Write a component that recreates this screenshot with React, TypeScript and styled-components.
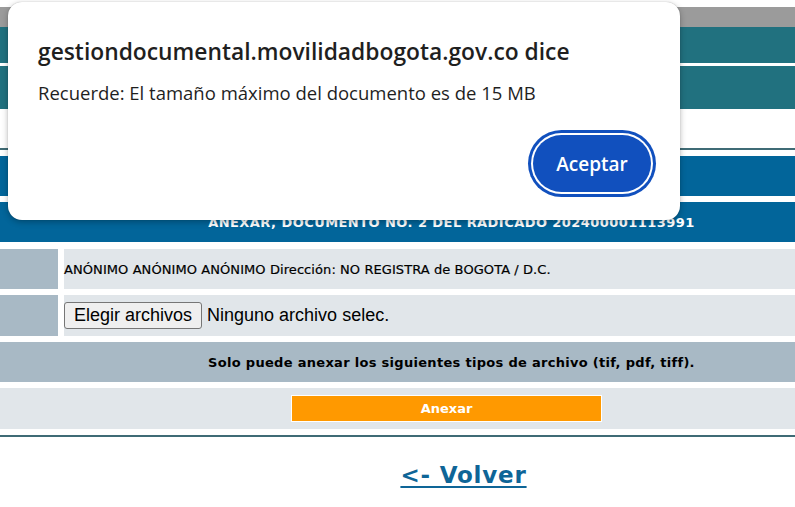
import React from 'react'
import styled, { createGlobalStyle } from 'styled-components'

const GlobalStyle = createGlobalStyle`
  html, body {
    margin: 0;
    padding: 0;
    background: #ffffff;
  }
`

const Screen = styled.div`
  position: relative;
  width: 795px;
  height: 507px;
  overflow: hidden;
  font-family: 'DejaVu Sans', Verdana, sans-serif;
  background: #ffffff;
`

const Page = styled.div`
  display: flex;
  flex-direction: column;
  padding-top: 7px;
`

const Band = styled.div<{ $h: number; $bg: string; $gap?: number }>`
  height: ${(p) => p.$h}px;
  background: ${(p) => p.$bg};
  margin-bottom: ${(p) => p.$gap ?? 0}px;
  display: flex;
  align-items: center;
  justify-content: center;
`

const Rule = styled.hr<{ $after: number }>`
  margin: 0 0 ${(p) => p.$after}px 0;
  border: 0;
  height: 2px;
  background: #3f6b75;
`

const BandTitle = styled.span`
  padding-left: 108px;
  color: #ffffff;
  font-weight: bold;
  font-size: 13px;
  letter-spacing: 0.45px;
`

const Grid = styled.div`
  display: grid;
  grid-template-columns: 58px 1fr;
  column-gap: 6px;
  row-gap: 6px;
  margin-top: 7px;
  margin-bottom: 6px;
`

const SideCell = styled.div`
  background: #a8b9c5;
`

const Cell = styled.div<{ $h: number }>`
  height: ${(p) => p.$h}px;
  background: #e1e6ea;
  display: flex;
  align-items: center;
`

const WideCell = styled.div<{ $h: number; $bg: string }>`
  grid-column: 1 / -1;
  height: ${(p) => p.$h}px;
  background: ${(p) => p.$bg};
  display: flex;
  align-items: center;
  justify-content: center;
`

const Sender = styled.span`
  font-size: 13px;
  color: #000;
  letter-spacing: 0.08px;
  -webkit-text-stroke: 0.2px #000;
`

const FileButton = styled.button`
  font-family: 'Liberation Sans', Arial, sans-serif;
  font-size: 18px;
  color: #000;
  background: #efefef;
  border: 1px solid #767676;
  border-radius: 3px;
  height: 27px;
  padding: 0 9px;
  margin-left: 0;
`

const FileLabel = styled.span`
  font-family: 'Liberation Sans', Arial, sans-serif;
  font-size: 18px;
  color: #000;
  margin-left: 5px;
`

const Notice = styled.span`
  padding-left: 108px;
  font-size: 13px;
  font-weight: bold;
  color: #000;
  letter-spacing: 0.3px;
`

const AttachButton = styled.button`
  margin-left: 98px;
  width: 311px;
  height: 27px;
  background: #ff9900;
  border: 1px solid #ffffff;
  color: #ffffff;
  font-family: 'DejaVu Sans', Verdana, sans-serif;
  font-weight: bold;
  font-size: 13px;
`

const BackRow = styled.div`
  display: flex;
  justify-content: center;
  padding-left: 132px;
  margin-top: 25px;
`

const BackLink = styled.a`
  font-size: 23px;
  font-weight: bold;
  letter-spacing: 0.8px;
  color: #0e6597;
  text-decoration: underline;
  text-underline-offset: 3px;
`

const Dialog = styled.div`
  position: absolute;
  left: 8px;
  top: 2px;
  width: 672px;
  height: 218px;
  box-sizing: border-box;
  background: #ffffff;
  border-radius: 14px;
  box-shadow: 0 2px 6px rgba(0, 0, 0, 0.28), 0 0 1px rgba(0, 0, 0, 0.3);
  padding: 32px 24px 0 30px;
  font-family: 'Open Sans', 'Noto Sans', sans-serif;
  display: flex;
  flex-direction: column;
`

const DialogTitle = styled.div`
  font-size: 22.8px;
  font-weight: 600;
  color: #1f1f1f;
  line-height: 36px;
`

const DialogText = styled.div`
  font-size: 18.5px;
  color: #1f1f1f;
  margin-top: 10px;
  line-height: 26px;
`

const DialogActions = styled.div`
  display: flex;
  justify-content: flex-end;
  margin-top: 29px;
`

const AcceptButton = styled.button`
  width: 118px;
  height: 57px;
  margin: 0 5px 0 0;
  border: 0;
  border-radius: 999px;
  background: #1150be;
  color: #ffffff;
  font-family: 'Open Sans', 'Noto Sans', sans-serif;
  font-size: 19px;
  font-weight: 600;
  box-shadow: 0 0 0 2px #ffffff, 0 0 0 5px #1150be;
`

export default function App() {
  return (
    <Screen>
      <GlobalStyle />
      <Page>
        <Band $h={20} $bg='#9b9b9b' />
        <Band $h={36} $bg='#21717f' $gap={3} />
        <Band $h={43} $bg='#21717f' $gap={39} />
        <Rule $after={6} />
        <Band $h={40} $bg='#02659a' $gap={6} />
        <Band $h={40} $bg='#02659a'>
          <BandTitle>ANEXAR, DOCUMENTO NO. 2 DEL RADICADO 202400001113991</BandTitle>
        </Band>
        <Grid>
          <SideCell />
          <Cell $h={40}>
            <Sender>ANÓNIMO ANÓNIMO ANÓNIMO Dirección: NO REGISTRA de BOGOTA / D.C.</Sender>
          </Cell>
          <SideCell />
          <Cell $h={41}>
            <FileButton type='button'>Elegir archivos</FileButton>
            <FileLabel>Ninguno archivo selec.</FileLabel>
          </Cell>
          <WideCell $h={40} $bg='#a8b9c5'>
            <Notice>Solo puede anexar los siguientes tipos de archivo (tif, pdf, tiff).</Notice>
          </WideCell>
          <WideCell $h={41} $bg='#e1e6ea'>
            <AttachButton type='button'>Anexar</AttachButton>
          </WideCell>
        </Grid>
        <Rule $after={0} />
        <BackRow>
          <BackLink href='#'>&lt;- Volver</BackLink>
        </BackRow>
      </Page>
      <Dialog role='dialog'>
        <DialogTitle>gestiondocumental.movilidadbogota.gov.co dice</DialogTitle>
        <DialogText>Recuerde: El tamaño máximo del documento es de 15 MB</DialogText>
        <DialogActions>
          <AcceptButton type='button'>Aceptar</AcceptButton>
        </DialogActions>
      </Dialog>
    </Screen>
  )
}
